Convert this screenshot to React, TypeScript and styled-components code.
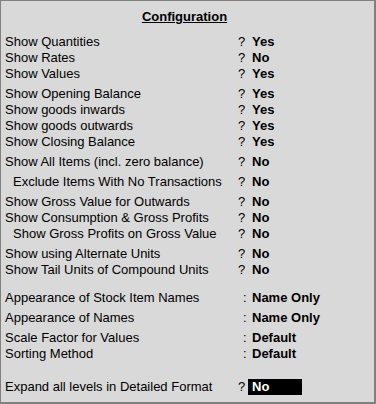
import React from "react";
import styled, { createGlobalStyle } from "styled-components";

const Global = createGlobalStyle`
  html, body { margin: 0; padding: 0; background: #d9d9d9; }
  * { box-sizing: border-box; }
`;

const Panel = styled.div`
  width: 376px;
  height: 404px;
  background: #d9d9d9;
  border-style: solid;
  border-color: #808080;
  border-width: 1px 2px 2px 1px;
  padding: 8px 0 0 4px;
  font-family: "Liberation Sans", Arial, sans-serif;
  font-size: 13px;
  line-height: 16px;
  color: #000;
  display: flex;
  flex-direction: column;
`;

const Title = styled.div`
  text-align: center;
  font-weight: bold;
  text-decoration: underline;
  padding-right: 10px;
  margin-bottom: 9px;
`;

const Row = styled.div<{ $gap: number }>`
  display: grid;
  grid-template-columns: 233px 10px 1fr;
  height: 16px;
  margin-top: ${(p) => p.$gap}px;
  white-space: nowrap;
`;

const Label = styled.span<{ $indent: boolean }>`
  padding-left: ${(p) => (p.$indent ? 8 : 0)}px;
`;

const Marker = styled.span<{ $colon: boolean }>`
  padding-left: ${(p) => (p.$colon ? 5 : 0)}px;
`;

const Value = styled.span<{ $active: boolean }>`
  font-weight: bold;
  padding-left: 4px;
  width: 54px;
  background: ${(p) => (p.$active ? "#000" : "transparent")};
  color: ${(p) => (p.$active ? "#fff" : "#000")};
`;

type Item = {
  label: string;
  value: string;
  gap?: number;
  indent?: boolean;
  colon?: boolean;
  active?: boolean;
};

const items: Item[] = [
  { label: "Show Quantities", value: "Yes" },
  { label: "Show Rates", value: "No" },
  { label: "Show Values", value: "Yes" },
  { label: "Show Opening Balance", value: "Yes", gap: 4 },
  { label: "Show goods inwards", value: "Yes" },
  { label: "Show goods outwards", value: "Yes" },
  { label: "Show Closing Balance", value: "Yes" },
  { label: "Show All Items (incl. zero balance)", value: "No", gap: 4 },
  { label: "Exclude Items With No Transactions", value: "No", gap: 4, indent: true },
  { label: "Show Gross Value for Outwards", value: "No", gap: 4 },
  { label: "Show Consumption & Gross Profits", value: "No" },
  { label: "Show Gross Profits on Gross Value", value: "No", indent: true },
  { label: "Show using Alternate Units", value: "No", gap: 4 },
  { label: "Show Tail Units of Compound Units", value: "No" },
  { label: "Appearance of Stock Item Names", value: "Name Only", gap: 12, colon: true },
  { label: "Appearance of Names", value: "Name Only", gap: 4, colon: true },
  { label: "Scale Factor for Values", value: "Default", gap: 4, colon: true },
  { label: "Sorting Method", value: "Default", colon: true },
  { label: "Expand all levels in Detailed Format", value: "No", gap: 17, active: true },
];

export default function App() {
  return (
    <>
      <Global />
      <Panel>
        <Title>Configuration</Title>
        {items.map((it) => (
          <Row key={it.label} $gap={it.gap ?? 0}>
            <Label $indent={!!it.indent}>{it.label}</Label>
            <Marker $colon={!!it.colon}>{it.colon ? ":" : "?"}</Marker>
            <Value $active={!!it.active}>{it.value}</Value>
          </Row>
        ))}
      </Panel>
    </>
  );
}
